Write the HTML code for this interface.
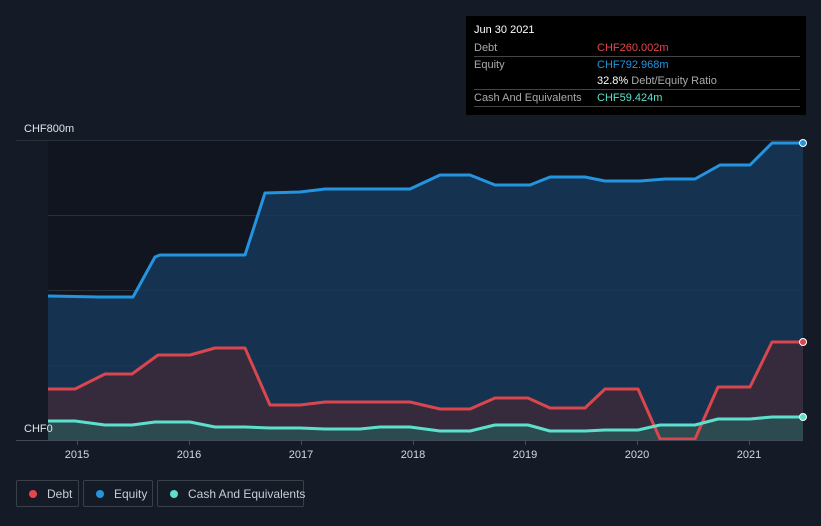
<!DOCTYPE html>
<html><head><meta charset="utf-8"><style>
body{margin:0;width:821px;height:526px;background:#151b26;font-family:"Liberation Sans",sans-serif;overflow:hidden;position:relative}
.tip{position:absolute;left:466px;top:16px;width:340px;height:99px;background:#000;color:#fff;font-size:11px}
.tip .r{position:absolute;left:8px;width:326px;border-bottom:1px solid #444;height:16px;line-height:16px;color:#aaa}
.tip .v{position:absolute;left:123px;top:0}
.leg{position:absolute;top:480px;height:27px;border:1px solid #3a404a;border-radius:2px;color:#c8ccd2;font-size:12px;line-height:27px;box-sizing:border-box;white-space:nowrap}
.leg i{display:inline-block;width:8px;height:8px;border-radius:50%;margin:0 10px 0 12px;vertical-align:0}
</style></head><body>
<svg width="821" height="526" style="position:absolute;left:0;top:0">
<rect x="48" y="140" width="755" height="300" fill="#10151f"/>
<g stroke="#2a303a" stroke-width="1"><line x1="16" y1="140.5" x2="803" y2="140.5"/><line x1="48" y1="215.5" x2="803" y2="215.5"/><line x1="48" y1="290.5" x2="803" y2="290.5"/><line x1="48" y1="365.5" x2="803" y2="365.5"/></g>
<path d="M48,296 L100,297 133,297 155,257 160,255 245,255 265,193 300,192 325,189 410,189 440,175 470,175 495,185 530,185 550,177 585,177 605,181 640,181 665,179 695,179 720,165 750,165 772,143 803,143 L803,440 48,440Z" fill="#173a5c" opacity="0.8"/>
<path d="M48,389 L75,389 105,374 132,374 158,355 190,355 215,348 245,348 270,405 300,405 325,402 410,402 440,409 470,409 495,398 528,398 550,408 585,408 605,389 638,389 660,439 695,439 718,387 750,387 772,342 803,342 L803,440 48,440Z" fill="#3a2a3a" opacity="0.9"/>
<path d="M48,421 L75,421 105,425 132,425 155,422 190,422 215,427 245,427 270,428 300,428 325,429 360,429 380,427 410,427 440,431 470,431 495,425 528,425 550,431 585,431 605,430 638,430 660,425 695,425 718,419 750,419 772,417 803,417 L803,440 48,440Z" fill="#2d4a50"/>
<g fill="none" stroke-width="3" stroke-linejoin="round">
<path d="M48,296 L100,297 133,297 155,257 160,255 245,255 265,193 300,192 325,189 410,189 440,175 470,175 495,185 530,185 550,177 585,177 605,181 640,181 665,179 695,179 720,165 750,165 772,143 803,143" stroke="#2394e0"/>
<path d="M48,389 L75,389 105,374 132,374 158,355 190,355 215,348 245,348 270,405 300,405 325,402 410,402 440,409 470,409 495,398 528,398 550,408 585,408 605,389 638,389 660,439 695,439 718,387 750,387 772,342 803,342" stroke="#d9464e"/>
<path d="M48,421 L75,421 105,425 132,425 155,422 190,422 215,427 245,427 270,428 300,428 325,429 360,429 380,427 410,427 440,431 470,431 495,425 528,425 550,431 585,431 605,430 638,430 660,425 695,425 718,419 750,419 772,417 803,417" stroke="#5ce0cc"/>
</g>
<circle cx="803" cy="143" r="3.5" fill="#2394e0" stroke="#fff" stroke-width="1"/>
<circle cx="803" cy="342" r="3.5" fill="#d9464e" stroke="#fff" stroke-width="1"/>
<circle cx="803" cy="417" r="3.5" fill="#5ce0cc" stroke="#fff" stroke-width="1"/>
<line x1="16" y1="440.5" x2="803" y2="440.5" stroke="#444a55"/>
<g stroke="#444a55"><line x1="77.5" y1="440" x2="77.5" y2="445"/><line x1="189.5" y1="440" x2="189.5" y2="445"/><line x1="301.5" y1="440" x2="301.5" y2="445"/><line x1="413.5" y1="440" x2="413.5" y2="445"/><line x1="525.5" y1="440" x2="525.5" y2="445"/><line x1="637.5" y1="440" x2="637.5" y2="445"/><line x1="749.5" y1="440" x2="749.5" y2="445"/></g>
<g fill="#d5d8dd" font-size="11" text-anchor="middle" font-family="Liberation Sans,sans-serif"><text x="77" y="458">2015</text><text x="189" y="458">2016</text><text x="301" y="458">2017</text><text x="413" y="458">2018</text><text x="525" y="458">2019</text><text x="637" y="458">2020</text><text x="749" y="458">2021</text></g>
<text x="24" y="132" fill="#e0e2e6" font-size="11" font-family="Liberation Sans,sans-serif">CHF800m</text>
<text x="24" y="432" fill="#e0e2e6" font-size="11" font-family="Liberation Sans,sans-serif">CHF0</text>
</svg>
<div class="tip">
<div style="position:absolute;left:8px;top:8px;color:#fff;font-size:11px">Jun 30 2021</div>
<div class="r" style="top:24px">Debt<span class="v" style="color:#e5454d">CHF260.002m</span></div>
<div class="r" style="top:41px;border:0">Equity<span class="v" style="color:#2394e0">CHF792.968m</span></div>
<div class="r" style="top:57px">&nbsp;<span class="v" style="color:#aaa"><b style="color:#fff;font-weight:normal">32.8%</b> Debt/Equity Ratio</span></div>
<div class="r" style="top:74px">Cash And Equivalents<span class="v" style="color:#5ce0cc">CHF59.424m</span></div>
</div>
<div class="leg" style="left:16px;width:63px"><i style="background:#e5454d"></i>Debt</div>
<div class="leg" style="left:83px;width:70px"><i style="background:#2394e0"></i>Equity</div>
<div class="leg" style="left:157px;width:147px"><i style="background:#5ce0cc"></i>Cash And Equivalents</div>
</body></html>
